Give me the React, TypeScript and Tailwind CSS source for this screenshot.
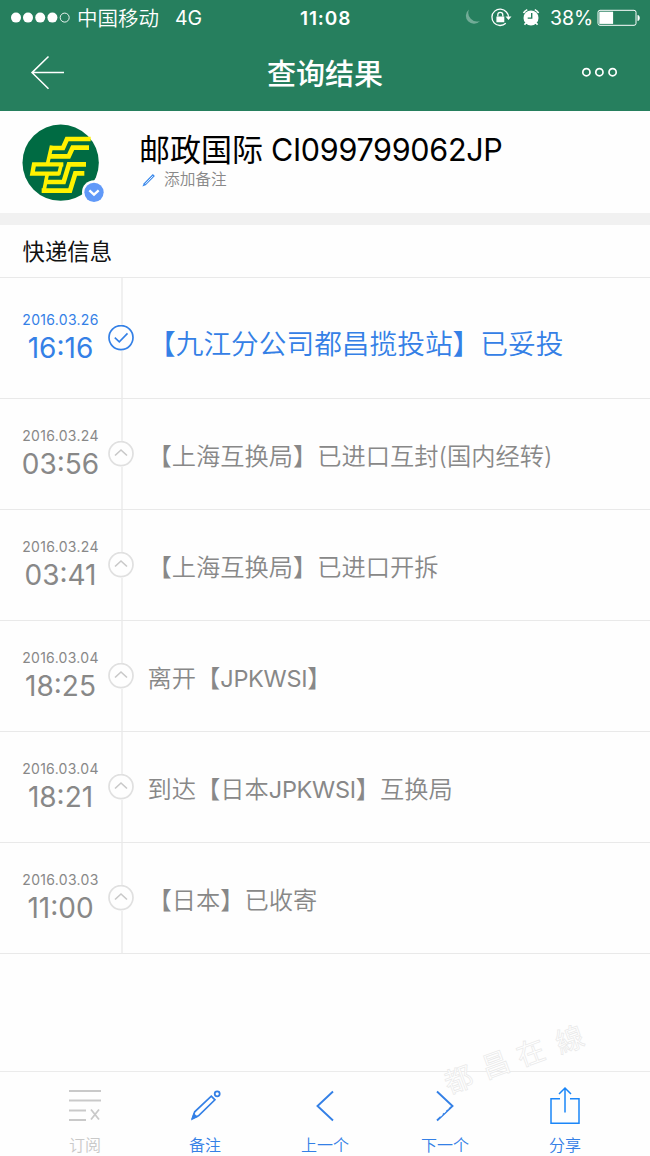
import React from "react";

interface TrackEvent {
  date: string;
  time: string;
  text: string;
}

const events: TrackEvent[] = [
  { date: "2016.03.26", time: "16:16", text: "【九江分公司都昌揽投站】已妥投" },
  { date: "2016.03.24", time: "03:56", text: "【上海互换局】已进口互封(国内经转)" },
  { date: "2016.03.24", time: "03:41", text: "【上海互换局】已进口开拆" },
  { date: "2016.03.04", time: "18:25", text: "离开【JPKWSI】" },
  { date: "2016.03.04", time: "18:21", text: "到达【日本JPKWSI】互换局" },
  { date: "2016.03.03", time: "11:00", text: "【日本】已收寄" },
];

export default function App() {
  return (
    <div className="relative flex h-[1156px] w-[650px] flex-col overflow-hidden bg-[#fefefe] font-['Inter','Noto_Sans_CJK_SC',sans-serif] whitespace-nowrap">
      <header className="h-[111px] shrink-0 bg-[#267f5e] text-white">
        <StatusBar />
        <NavBar />
      </header>
      <PackageCard />
      <div className="h-3 shrink-0 bg-[#f1f1f1]" />
      <h2 className="flex h-[53px] shrink-0 items-center border-b border-[#e9e9e9] pt-0.5 pl-[22.5px] text-[22.4px] text-[#111]">
        快递信息
      </h2>
      <ul>
        {events.map((event, i) => (
          <EventRow key={event.time} event={event} current={i === 0} />
        ))}
      </ul>
      <TabBar />
      <Watermark />
    </div>
  );
}

function StatusBar() {
  return (
    <div className="grid h-9 grid-cols-[300px_1fr_187px] items-center">
      <div className="flex items-center pl-[11px]">
        <svg className="h-3 w-[60px]" viewBox="0 0 60 12" fill="white">
          <circle cx="5" cy="5.6" r="5" />
          <circle cx="17" cy="5.6" r="5" />
          <circle cx="29.2" cy="5.6" r="5" />
          <circle cx="41.4" cy="5.6" r="5" />
          <circle cx="53.7" cy="5.6" r="4.5" fill="none" stroke="white" strokeWidth="0.9" />
        </svg>
        <span className="ml-1.5 pt-px text-[20.5px] leading-6 font-[350]">中国移动</span>
        <span className="ml-4 text-[19.5px] leading-6">4G</span>
      </div>
      <span className="pt-px text-[19px] leading-6 font-semibold tracking-[0.9px]">11:08</span>
      <div className="flex items-center">
        <svg className="h-5 w-[78px]" viewBox="0 0 78 20">
          <path d="M6 1.5a8 8 0 1 0 11 11.5A8.7 8.7 0 0 1 6 1.5z" fill="#72ac97" />
          <g fill="none" stroke="white" strokeWidth="1.3">
            <path d="M43.4 4A8.2 8.2 0 1 0 42.8 15.2M43.4 4a8 8 0 0 1 2.1 4.8" />
            <path d="M34.8 8.6V6.8a2.5 2.5 0 0 1 5 0v1.8" />
          </g>
          <path d="M33.4 8.4h7.9v5.8h-7.9zM42.5 8.5h6l-3 3.6z" fill="white" />
          <circle cx="68" cy="9.9" r="7.5" fill="white" />
          <path d="M60.5 5a9 9 0 0 1 3.8-3.4M71.8 1.6A9 9 0 0 1 75.6 5" fill="none" stroke="white" strokeWidth="1.6" />
          <path d="M68.7 5.1v5h-4" fill="none" stroke="#267f5e" strokeWidth="1.4" />
          <path d="M62.8 15l-1.3 1.8M73.2 15l1.3 1.8" stroke="white" strokeWidth="1.6" />
        </svg>
        <span className="ml-[9px] w-[42px] text-[19.5px] leading-6">38%</span>
        <svg className="ml-[5px] h-[18px] w-[44px] shrink-0" viewBox="0 0 44 18">
          <rect x="1" y="1.3" width="38" height="15" rx="2" fill="none" stroke="white" strokeWidth="1" />
          <path d="M2.3 2.7h13.8v12.2H2.3z" fill="white" />
          <path d="M40.5 6c3 .4 3 5.6 0 6z" fill="white" />
        </svg>
      </div>
    </div>
  );
}

function NavBar() {
  return (
    <div className="grid h-[75px] grid-cols-3 items-center">
      <svg className="-mt-px ml-[30px] h-9 w-9" viewBox="0 0 36 36" fill="none" stroke="white" strokeWidth="1.5">
        <path d="M34 17.6H2M18.5 1.5L2 17.6l16.5 16.2" />
      </svg>
      <h1 className="pt-0.5 text-center text-[29px] leading-9 font-medium">查询结果</h1>
      <svg className="-mt-0.5 mr-[31px] ml-auto h-3 w-[38px]" viewBox="0 0 38 12" fill="none" stroke="white" strokeWidth="1.7">
        <circle cx="5.4" cy="5.2" r="3.6" />
        <circle cx="18.4" cy="5.2" r="3.6" />
        <circle cx="31.6" cy="5.2" r="3.6" />
      </svg>
    </div>
  );
}

function PackageCard() {
  return (
    <section className="flex h-[102px] shrink-0">
      <PostLogo />
      <div className="ml-[34px] pt-[19px]">
        <div className="flex items-center leading-10 text-black">
          <span className="text-[31px]">邮政国际</span>
          <span className="ml-2 text-[30.5px] tracking-[-0.3px]">CI099799062JP</span>
        </div>
        <div className="flex items-center text-[15.7px] leading-5 text-[#888]">
          <svg className="mr-[8px] ml-[3px] h-[14px] w-[14px]" viewBox="0 0 14 14">
            <path d="M.4 13.4l1.4-3.2L10.8.9l2.1 2.1-9.2 9.2z" fill="#3f8cec" />
            <path d="M3.4 10.8l7.4-7.6" stroke="white" strokeWidth="0.9" />
          </svg>
          <span className="font-[350]">添加备注</span>
        </div>
      </div>
    </section>
  );
}

function PostLogo() {
  return (
    <svg className="mt-[13px] ml-[22px] h-[80px] w-[83px]" viewBox="6 6 249 240">
      <circle cx="122" cy="122" r="114.5" fill="#006b43" />
      <g fill="none" stroke="#fff200" strokeWidth="14">
        <path d="M212 51H141L129 78H92" />
        <path d="M207 77H158L146 103H84" />
        <path d="M95 71L82 128" strokeWidth="11" />
        <path d="M130 127H42L37 155H119" strokeWidth="13" />
        <path d="M124 127L116 158" strokeWidth="11" />
        <path d="M82 155L72 206" strokeWidth="11" />
        <path d="M198 127H147L131 180H80" />
        <path d="M193 154H166L150 206H65" />
      </g>
      <circle cx="222" cy="211" r="36" fill="#fefefe" />
      <circle cx="222" cy="211" r="29" fill="#6099f8" />
      <path d="M208 205l14 13 14-13" fill="none" stroke="white" strokeWidth="7" />
    </svg>
  );
}

function EventRow({ event, current }: { event: TrackEvent; current: boolean }) {
  return (
    <li
      className={`flex border-b border-[#e9e9e9] ${
        current ? "h-[121px] pt-[5px] text-[#3480e6]" : "h-[111px] text-[#888]"
      }`}
    >
      <div className="w-[121px] shrink-0 pt-[27px] text-center">
        <div className="text-[14px] leading-5 tracking-[0.3px]">{event.date}</div>
        <div className="mt-0.5 text-[28px] leading-8">{event.time}</div>
      </div>
      <div className={`flex w-0 flex-col items-center ${current ? "-mt-[5px]" : ""}`}>
        <div className={`w-0.5 shrink-0 translate-x-px bg-[#f0f0f0] ${current ? "h-[47px]" : "h-[42px]"}`} />
        <svg className="h-[26px] w-[26px] shrink-0" viewBox="0 0 26 26" fill="none">
          <circle cx="13" cy="12.6" r="12" stroke={current ? "#3480e6" : "#e0e0e0"} strokeWidth="1.7" />
          <path
            d={current ? "M6.8 12.6l4.5 4.3 8.2-8.5" : "M7 14.5l6-5.5 6 5.5"}
            stroke={current ? "#3480e6" : "#c8c8c8"}
            strokeWidth="1.6"
          />
        </svg>
        <div className="w-0.5 flex-1 translate-x-px bg-[#f0f0f0]" />
      </div>
      <p
        className={`font-[350] ${
          current ? "ml-[27px] pt-10 text-[27.7px] leading-[42px]" : "ml-[26.5px] pt-[38px] text-[24.25px] leading-10"
        }`}
      >
        {/* station codes are set a little tighter than the Chinese text */}
        {event.text.split(/([A-Z]+)/).map((part, i) => (
          <span key={i} className={i % 2 ? "text-[23.5px] font-normal tracking-[-0.3px]" : ""}>
            {part}
          </span>
        ))}
      </p>
    </li>
  );
}

function TabBar() {
  return (
    <nav className="mt-auto grid h-[85px] shrink-0 grid-cols-5 border-t border-[#ebebeb] px-[25px] text-[#3480e6]">
      <Tab label="订阅" disabled>
        <path d="M2 5h32M2 14.5h32M2 24.5h17M2 34h17" strokeWidth="2" />
        <path d="M24 23.5l8 10M32 23.5l-8 10" strokeWidth="1.8" />
      </Tab>
      <Tab label="备注">
        <path d="M5.5 32l2.2-6.2L24.3 10.2l3.6 3.6L11.5 29.8z" strokeWidth="1.7" />
        <path d="M4 34.5l2.6-7.5 4.4 4z" fill="currentColor" stroke="none" />
        <circle cx="30.2" cy="7.8" r="2.5" strokeWidth="1.8" />
      </Tab>
      <Tab label="上一个">
        <path d="M26 5.5L10.5 20 26 34.5" strokeWidth="1.9" />
      </Tab>
      <Tab label="下一个">
        <path d="M10 5.5L25.5 20 10 34.5" strokeWidth="1.9" />
      </Tab>
      <Tab label="分享">
        <path d="M13 12.7H4v24.6h28V12.7h-9M18 26.5V2M12 8l6-6 6 6" stroke="#1b86f8" strokeWidth="1.5" />
      </Tab>
    </nav>
  );
}

interface TabProps {
  label: string;
  disabled?: boolean;
  children: React.ReactNode;
}

function Tab({ label, disabled = false, children }: TabProps) {
  return (
    <div className={`flex flex-col items-center pt-[14px] ${disabled ? "text-[#c9c9c9]" : ""}`}>
      <svg className="h-10 w-9" viewBox="0 0 36 40" fill="none" stroke="currentColor">
        {children}
      </svg>
      <span className="mt-[7px] text-[16px] leading-6 font-[350]">{label}</span>
    </div>
  );
}

// Faint outlined stamp lying over the lower right corner
function Watermark() {
  return (
    <svg
      className="pointer-events-none absolute top-[1010px] left-[430px] h-[110px] w-[180px] font-['Noto_Sans_CJK_TC',sans-serif]"
      viewBox="0 0 180 110"
      fill="white"
      stroke="#e9e9e9"
      strokeWidth="0.7"
      fontSize="28"
    >
      <text transform="translate(19 84) rotate(-20)">都</text>
      <text transform="translate(56 69) rotate(-20)">昌</text>
      <text transform="translate(91 57) rotate(-20)">在</text>
      <text transform="translate(130 44) rotate(-20)">線</text>
      <path d="M10 106l8-8" stroke="white" strokeWidth="2" strokeDasharray="3 2" />
    </svg>
  );
}
